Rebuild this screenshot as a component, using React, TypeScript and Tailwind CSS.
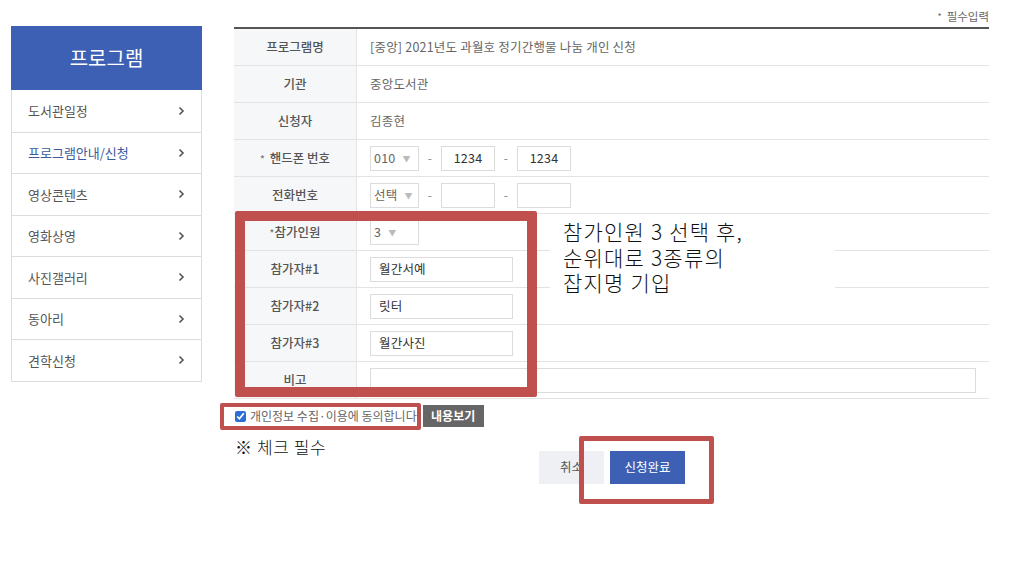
import React from "react";

const FONT = { fontFamily: '"Noto Sans CJK KR", "Noto Sans", sans-serif' };

function Chevron() {
  return (
    <svg width="7" height="10" viewBox="0 0 7 10" className="text-[#555]">
      <path d="M1.5 1.5 L5 5 L1.5 8.5" fill="none" stroke="currentColor" strokeWidth="1.6" />
    </svg>
  );
}

function Caret() {
  return <span className="text-[8px] text-[#bbb] ml-[7px] mt-[1px]">▼</span>;
}

const menu = ["도서관일정", "프로그램안내/신청", "영상콘텐츠", "영화상영", "사진갤러리", "동아리", "견학신청"];

function Row({ label, star, children }: { label: string; star?: "sp" | "tight"; children?: React.ReactNode }) {
  return (
    <div className="flex h-[37px] border-b border-[#e3e3e3]">
      <div className="w-[123px] shrink-0 bg-[#f6f7f9] border-r border-[#e3e3e3] flex items-center justify-center text-[12.5px] font-medium text-[#555]">
        {star === "sp" && <span className="text-[10px] text-[#777] mr-[5px]">*</span>}
        {star === "tight" && <span className="text-[10px] text-[#777]">*</span>}
        {label}
      </div>
      <div className="flex-1 flex items-center pl-[13px] text-[12.5px] text-[#666] tracking-[0.2px]">{children}</div>
    </div>
  );
}

function Sel({ v }: { v: string }) {
  return (
    <div className="w-[49px] h-[25px] border border-[#dcdcdc] flex items-center pl-[3px] text-[12.5px] text-[#666] bg-white">
      {v}
      <Caret />
    </div>
  );
}

function Inp({ v, w = "w-[54px]", center = true }: { v?: string; w?: string; center?: boolean }) {
  return (
    <div className={`${w} h-[25px] border border-[#dcdcdc] flex items-center ${center ? "justify-center" : "pl-[8px]"} text-[12.5px] text-[#333] bg-white`}>
      {v}
    </div>
  );
}

function Dash() {
  return <span className="w-[22px] text-center text-[#888] text-[12px]">-</span>;
}

export default function App() {
  return (
    <div className="relative w-[1010px] h-[565px] bg-white flex overflow-hidden" style={FONT}>
      {/* Sidebar */}
      <div className="ml-[11px] mt-[26px] w-[191px] shrink-0 self-start">
        <div className="h-[64px] bg-[#3d5fb4] flex items-center justify-center text-white text-[20px]">프로그램</div>
        <div className="border-x border-b border-[#dcdcdc]">
          {menu.map((m, i) => (
            <div
              key={m}
              className={`h-[41.5px] flex items-center justify-between pl-[16px] pr-[16px] text-[13px] ${i > 0 ? "border-t border-[#dcdcdc]" : ""} ${i === 1 ? "text-[#3c5a9c]" : "text-[#555]"}`}
            >
              <span>{m}</span>
              <Chevron />
            </div>
          ))}
        </div>
      </div>

      {/* Main */}
      <div className="ml-[32px] w-[755px] shrink-0 pt-[9px]">
        <div className="h-[16px] flex justify-end items-center text-[11.5px] text-[#666] mb-[2px]">
          <span className="text-[9px] mr-[5px]">*</span>필수입력
        </div>
        <div className="border-t-2 border-[#555]">
          <Row label="프로그램명">[중앙] 2021년도 과월호 정기간행물 나눔 개인 신청</Row>
          <Row label="기관">중앙도서관</Row>
          <Row label="신청자">김종현</Row>
          <Row label="핸드폰 번호" star="sp">
            <Sel v="010" />
            <Dash />
            <Inp v="1234" />
            <Dash />
            <Inp v="1234" />
          </Row>
          <Row label="전화번호">
            <Sel v="선택" />
            <Dash />
            <Inp />
            <Dash />
            <Inp />
          </Row>
          <Row label="참가인원" star="tight">
            <Sel v="3" />
          </Row>
          <Row label="참가자#1">
            <Inp v="월간서예" w="w-[143px]" center={false} />
          </Row>
          <Row label="참가자#2">
            <Inp v="릿터" w="w-[143px]" center={false} />
          </Row>
          <Row label="참가자#3">
            <Inp v="월간사진" w="w-[143px]" center={false} />
          </Row>
          <Row label="비고">
            <Inp w="w-[606px]" />
          </Row>
        </div>

        <div className="mt-[6px] flex items-center">
          <input type="checkbox" defaultChecked className="w-[11px] h-[11px] ml-[1px] mr-[4px] accent-[#2b6fd6]" />
          <span className="text-[12px] text-[#666]">개인정보 수집·이용에 동의합니다</span>
          <span className="ml-[6px] h-[22px] w-[61px] bg-[#666] text-white text-[12px] font-bold flex items-center justify-center">내용보기</span>
        </div>

        <div className="mt-[24px] flex justify-center gap-[6px] pl-[1px]">
          <div className="w-[65px] h-[33px] bg-[#eff0f4] text-[#555] text-[12.5px] flex items-center justify-center">취소</div>
          <div className="w-[75px] h-[33px] bg-[#3d5fb4] text-white text-[12.5px] flex items-center justify-center">신청완료</div>
        </div>
      </div>

      {/* Annotations */}
      <div className="absolute left-[235px] top-[211px] w-[302px] h-[186px] border-[10px] border-[#c0504d] rounded-[2px]" />
      <div className="absolute left-[220px] top-[403px] w-[201px] h-[27px] border-[4px] border-[#c0504d] rounded-[2px]" />
      <div className="absolute left-[579px] top-[436px] w-[135px] h-[68px] border-[5px] border-[#c0504d] rounded-[2px]" />
      <div className="absolute left-[550px] top-[214px] w-[285px] h-[82px] bg-white pl-[13px] pt-[5px] text-[21px] font-light tracking-[1.2px] leading-[25.5px] text-[#111]">
        <div>참가인원 3 선택 후,</div>
        <div>순위대로 3종류의</div>
        <div>잡지명 기입</div>
      </div>
      <div className="absolute left-[235px] top-[434px] text-[17px] font-light tracking-[0.6px] text-[#111]">※ 체크 필수</div>
    </div>
  );
}
